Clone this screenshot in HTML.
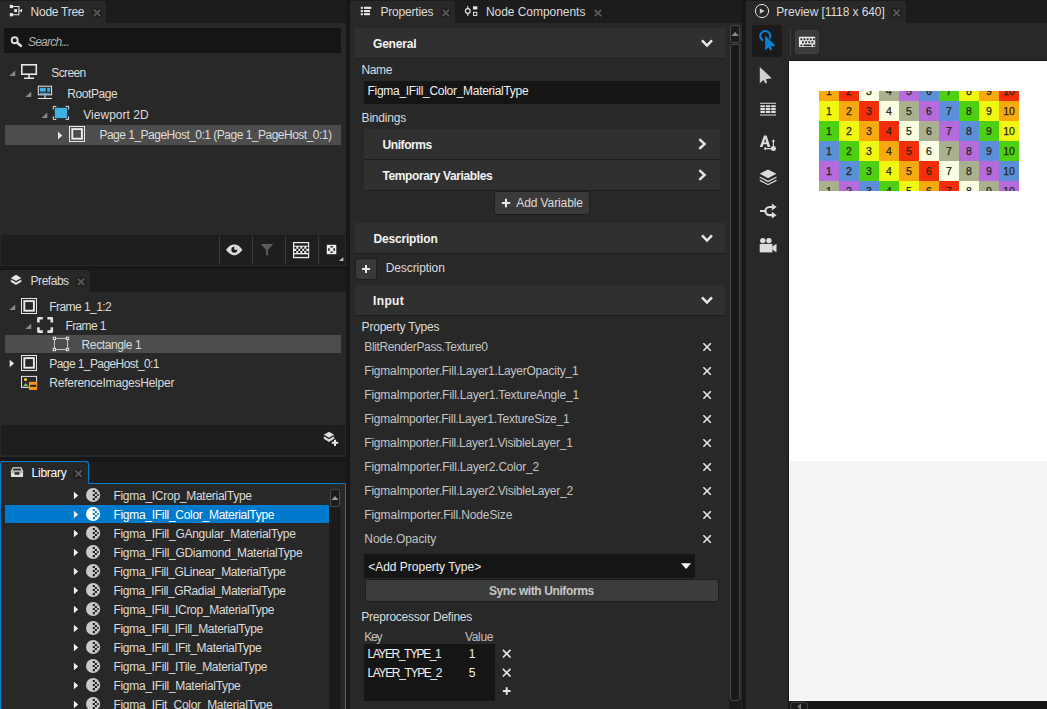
<!DOCTYPE html>
<html><head><meta charset="utf-8"><title>Properties</title>
<style>
*{box-sizing:border-box;margin:0;padding:0}
html,body{width:1047px;height:709px;overflow:hidden;background:#171717}
.ts{position:absolute;background:#1c1c1c}
body{position:relative;font-family:"Liberation Sans","DejaVu Sans",sans-serif;font-size:12px;color:#d8d8d8;line-height:1}
.a{position:absolute}
.p{position:absolute;background:#282828}
.t{position:absolute;white-space:nowrap;font-size:12px;line-height:14px;height:14px;color:#dcdcdc}
.tab{position:absolute;background:#282828;top:1px;height:22px;border-radius:3px 3px 0 0}
.hdr{position:absolute;background:#303030;border-bottom:1px solid #1e1e1e;height:31px}
.b{font-weight:bold;color:#f4f4f4}
.inp{position:absolute;background:#151515}
.sel{position:absolute;background:#4d4d4d}
.btn{position:absolute;background:#3a3a3a;border:1px solid #1e1e1e;border-radius:3px}
.sep{position:absolute;width:1px;background:#3a3a3a}
svg{position:absolute;overflow:visible}
.g i{display:block;float:left;width:20px;height:20px;font-style:normal;font-size:10.5px;line-height:20px;text-align:center;color:#26250e;-webkit-text-stroke:0.25px #26250e}
</style></head><body>

<div class="ts" style="left:0;top:0;width:346px;height:23px"></div>
<div class="ts" style="left:0;top:270px;width:346px;height:22px"></div>
<div class="ts" style="left:0;top:461px;width:346px;height:22px"></div>
<div class="ts" style="left:350px;top:0;width:392px;height:23px"></div>
<div class="ts" style="left:746px;top:0;width:301px;height:23px"></div>
<!-- ===== LEFT: Node Tree ===== -->
<div class="p" style="left:0;top:23px;width:346px;height:243px"></div>
<div class="tab" style="left:0;width:106px"></div>
<div class="inp" style="left:4px;top:28px;width:337px;height:25px"></div>
<div class="sel" style="left:5px;top:125px;width:336px;height:20px"></div>
<div class="a" style="left:1px;top:235px;width:344px;height:30px;background:#1e1e1e"></div>
<div class="sep" style="left:219px;top:236px;height:28px"></div>
<div class="sep" style="left:252px;top:236px;height:28px"></div>
<div class="sep" style="left:285px;top:236px;height:28px"></div>
<div class="sep" style="left:318px;top:236px;height:28px"></div>

<!-- ===== LEFT: Prefabs ===== -->
<div class="p" style="left:0;top:292px;width:346px;height:165px"></div>
<div class="tab" style="left:0;top:270px;width:90px;height:22px"></div>
<div class="sel" style="left:5px;top:335px;width:336px;height:18px"></div>
<div class="a" style="left:1px;top:425px;width:344px;height:30px;background:#1e1e1e"></div>

<!-- ===== LEFT: Library ===== -->
<div class="p" style="left:0;top:483px;width:346px;height:226px;border:1px solid #007acc;border-bottom:none"></div>
<div class="tab" style="left:0;top:461px;width:89px;height:23px;border:1px solid #007acc;border-bottom:none"></div>
<div class="a" style="left:5px;top:505px;width:324px;height:18px;background:#007acc"></div>

<!-- ===== MIDDLE: Properties ===== -->
<div class="p" style="left:350px;top:23px;width:392px;height:686px"></div>
<div class="tab" style="left:350px;width:105px"></div>
<div class="hdr" style="left:355px;top:28px;width:370px"></div>
<div class="inp" style="left:364px;top:81px;width:356px;height:23px"></div>
<div class="hdr" style="left:364px;top:129px;width:356px"></div>
<div class="hdr" style="left:364px;top:160px;width:356px"></div>
<div class="btn" style="left:494px;top:191px;width:96px;height:24px"></div>
<div class="hdr" style="left:355px;top:223px;width:370px"></div>
<div class="btn" style="left:355px;top:258px;width:22px;height:22px"></div>
<div class="hdr" style="left:355px;top:285px;width:370px"></div>
<div class="inp" style="left:364px;top:554px;width:331px;height:24px"></div>
<div class="btn" style="left:365px;top:579px;width:354px;height:23px;background:#3c3c3c"></div>
<div class="inp" style="left:364px;top:644px;width:131px;height:57px"></div>

<!-- ===== RIGHT: Preview ===== -->
<div class="p" style="left:746px;top:23px;width:301px;height:686px"></div>
<div class="tab" style="left:746px;width:160px"></div>
<div class="a" style="left:752px;top:25px;width:30px;height:32px;background:#1b1b1b;border-radius:3px"></div>
<div class="sep" style="left:790px;top:29px;height:26px;background:#3c3c3c"></div>
<div class="btn" style="left:795px;top:30px;width:24px;height:24px;background:#3b3b3b;border-color:#414141"></div>
<div class="a" style="left:788px;top:60px;width:259px;height:649px;background:#161616"></div>
<div class="a" style="left:789px;top:61px;width:258px;height:640px;background:#fff"></div>
<div class="a" style="left:790px;top:461px;width:257px;height:239px;background:#f4f4f4"></div>
<div class="a" style="left:819px;top:91px;width:200px;height:100px;overflow:hidden"><div class="a g" style="left:0;top:-10px;width:200px"><i style="background:#f7a90f">1</i><i style="background:#f42d0b">2</i><i style="background:#f8fde0">3</i><i style="background:#a8b090">4</i><i style="background:#b56bdb">5</i><i style="background:#5b8fd9">6</i><i style="background:#4dd012">7</i><i style="background:#f0f711">8</i><i style="background:#f7a90f">9</i><i style="background:#f42d0b">10</i><i style="background:#f0f711">1</i><i style="background:#f7a90f">2</i><i style="background:#f42d0b">3</i><i style="background:#f8fde0">4</i><i style="background:#a8b090">5</i><i style="background:#b56bdb">6</i><i style="background:#5b8fd9">7</i><i style="background:#4dd012">8</i><i style="background:#f0f711">9</i><i style="background:#f7a90f">10</i><i style="background:#4dd012">1</i><i style="background:#f0f711">2</i><i style="background:#f7a90f">3</i><i style="background:#f42d0b">4</i><i style="background:#f8fde0">5</i><i style="background:#a8b090">6</i><i style="background:#b56bdb">7</i><i style="background:#5b8fd9">8</i><i style="background:#4dd012">9</i><i style="background:#f0f711">10</i><i style="background:#5b8fd9">1</i><i style="background:#4dd012">2</i><i style="background:#f0f711">3</i><i style="background:#f7a90f">4</i><i style="background:#f42d0b">5</i><i style="background:#f8fde0">6</i><i style="background:#a8b090">7</i><i style="background:#b56bdb">8</i><i style="background:#5b8fd9">9</i><i style="background:#4dd012">10</i><i style="background:#b56bdb">1</i><i style="background:#5b8fd9">2</i><i style="background:#4dd012">3</i><i style="background:#f0f711">4</i><i style="background:#f7a90f">5</i><i style="background:#f42d0b">6</i><i style="background:#f8fde0">7</i><i style="background:#a8b090">8</i><i style="background:#b56bdb">9</i><i style="background:#5b8fd9">10</i><i style="background:#a8b090">1</i><i style="background:#b56bdb">2</i><i style="background:#5b8fd9">3</i><i style="background:#4dd012">4</i><i style="background:#f0f711">5</i><i style="background:#f7a90f">6</i><i style="background:#f42d0b">7</i><i style="background:#f8fde0">8</i><i style="background:#a8b090">9</i><i style="background:#b56bdb">10</i></div></div>

<svg width="1047" height="709" viewBox="0 0 1047 709" style="left:0;top:0"><g fill="#e6e6e6" stroke="none"><rect x="9.8" y="4.9" width="3.2" height="3.2"/><rect x="14.2" y="9.1" width="2.9" height="3"/><rect x="9.8" y="13.1" width="3.2" height="3.2"/></g>
<path d="M13 6.5H18.9V14.7H13M18.9 10.6H22M21.5 9V12.2" stroke="#e6e6e6" stroke-width="1.1" fill="none"/>
<rect x="92.19999999999999" y="8.2" width="9.8" height="9.5" fill="#1e1e1e"/>
<path d="M93.89999999999999 9.7L100.3 16.1M100.3 9.7L93.89999999999999 16.1" stroke="#585858" stroke-width="1.9" fill="none"/>
<circle cx="14.7" cy="40.3" r="3" fill="none" stroke="#dcdcdc" stroke-width="1.9"/><path d="M17.2 42.8L20.8 45.8" stroke="#dcdcdc" stroke-width="2.7" stroke-linecap="round"/>
<path d="M15.2 70.4V76H9.399999999999999Z" fill="#8a8a8a"/>
<path d="M31.2 91.4V97H25.4Z" fill="#8a8a8a"/>
<path d="M47.3 112.4V118H41.5Z" fill="#8a8a8a"/>
<path d="M58 131.7L62.3 135.5L58 139.3Z" fill="#ececec"/>
<rect x="21.8" y="64.8" width="14.5" height="9.4" fill="none" stroke="#e6e6e6" stroke-width="1.6"/><path d="M29 75V78M24 78.2H34.1" stroke="#e6e6e6" stroke-width="1.6" fill="none"/>
<rect x="38.3" y="86.2" width="13.3" height="8.6" fill="none" stroke="#e6e6e6" stroke-width="1"/><path d="M45 95.3V98M38 98.5H52" stroke="#e6e6e6" stroke-width="1.1" fill="none"/>
<g fill="#3cb1e2"><rect x="39.8" y="87.8" width="6" height="3.8"/><rect x="47.2" y="87.8" width="3" height="3.8"/><rect x="39.8" y="92.8" width="10.4" height="1.1"/></g>
<rect x="54.8" y="107.8" width="12.4" height="10.3" fill="#3cb1e2"/>
<path d="M56.3 106.4H53.3V109.4M65.6 106.4H68.6V109.4M53.3 116.4V119.4H56.3M68.6 116.4V119.4H65.6" stroke="#e6e6e6" stroke-width="1" fill="none"/>
<rect x="69.5" y="126.5" width="15" height="15" fill="none" stroke="#e8e8e8" stroke-width="1"/>
<rect x="72.3" y="129.1" width="9.6" height="9.6" fill="none" stroke="#ececec" stroke-width="1.9"/>
<path d="M226 249.8C229 245.6 232 244.4 234.2 244.4C236.6 244.4 239.6 245.6 242.4 249.8C239.6 254 236.6 255.2 234.2 255.2C232 255.2 229 254 226 249.8Z" fill="#dcdcdc"/>
<circle cx="234.3" cy="249.8" r="3" fill="#1e1e1e"/><path d="M234.3 249.8L234.3 246.6A3.2 3.2 0 0 1 237.5 249.8Z" fill="#dcdcdc"/>
<path d="M260.8 244H273.3L268 250V255.9L266 254.6V250Z" fill="#5c5c5c"/>
<rect x="293" y="242" width="16.2" height="16.2" fill="#ececec"/><rect x="294.2" y="243.2" width="13.8" height="2.5" fill="#1e1e1e"/><rect x="294.2" y="254.4" width="13.8" height="2.5" fill="#1e1e1e"/>
<path d="M294.3 246.70h2v2.1h-2zM298.3 246.70h2v2.1h-2zM302.3 246.70h2v2.1h-2zM306.3 246.70h2v2.1h-2zM296.3 248.85h2v2.1h-2zM300.3 248.85h2v2.1h-2zM304.3 248.85h2v2.1h-2zM294.3 251.00h2v2.1h-2zM298.3 251.00h2v2.1h-2zM302.3 251.00h2v2.1h-2zM306.3 251.00h2v2.1h-2z" fill="#111"/>
<rect x="326.8" y="244.8" width="9.5" height="9.4" fill="#ececec"/><path d="M330.4 246.2h2.4v1.4h-2.4zM330.4 251.4h2.4v1.4h-2.4zM328.2 248.3h1.4v2.4h-1.4zM333.5 248.3h1.4v2.4h-1.4z" fill="#050505"/>
<path d="M343.3 256.9V260.9H339Z" fill="#c4c4c4"/>
<path d="M16 274.8L21.3 277.9L16 281L10.8 277.9Z" fill="#e6e6e6"/><path d="M10.8 279.4L16 282.5L21.3 279.4V281.7L16 284.9L10.8 281.7Z" fill="#e6e6e6"/>
<rect x="76.1" y="277.1" width="9.8" height="9.5" fill="#1e1e1e"/>
<path d="M77.8 278.6L84.2 285.0M84.2 278.6L77.8 285.0" stroke="#585858" stroke-width="1.9" fill="none"/>
<path d="M15.2 304.4V310H9.399999999999999Z" fill="#8a8a8a"/>
<path d="M31.2 323.4V329H25.4Z" fill="#8a8a8a"/>
<path d="M9.7 359.7L14.0 363.5L9.7 367.3Z" fill="#ececec"/>
<rect x="21.5" y="298.5" width="15" height="15" fill="none" stroke="#e8e8e8" stroke-width="1"/>
<rect x="24.3" y="301.1" width="9.6" height="9.6" fill="none" stroke="#ececec" stroke-width="1.9"/>
<path d="M42.8 318.2H38.4V322.6M47.4 318.2H51.8V322.6M38.4 327.2V331.6H42.8M51.8 327.2V331.6H47.4" stroke="#e2e2e2" stroke-width="2.6" fill="none" stroke-linejoin="round"/>
<path d="M56 338.4H66M56 349.6H66M54.4 340V348M67.6 340V348" stroke="#c8c8c8" stroke-width="1" fill="none"/>
<g fill="#4d4d4d" stroke="#f0f0f0" stroke-width="0.9"><rect x="53.2" y="337.2" width="2.4" height="2.4"/><rect x="66.3" y="337.2" width="2.4" height="2.4"/><rect x="53.2" y="348.3" width="2.4" height="2.4"/><rect x="66.3" y="348.3" width="2.4" height="2.4"/></g>
<rect x="21.5" y="355.5" width="15" height="15" fill="none" stroke="#e8e8e8" stroke-width="1"/>
<rect x="24.3" y="358.1" width="9.6" height="9.6" fill="none" stroke="#ececec" stroke-width="1.9"/>
<rect x="21.5" y="376.4" width="15.1" height="11" fill="none" stroke="#e6e6e6" stroke-width="1"/><circle cx="25.5" cy="379.5" r="1.5" fill="#f2e51c"/><path d="M22.8 386.3L25.7 383L28.6 386.3Z" fill="#7cc24e"/>
<rect x="28.9" y="381.8" width="8.2" height="8.2" fill="#f7941e"/><rect x="30.3" y="384.8" width="5.9" height="2" fill="#222"/>
<path d="M329 431.7L334.2 434.7L329 437.8L323.8 434.7Z" fill="#dcdcdc"/><path d="M323.8 436.2L329 439.3L334.2 436.2V438.8L329 442L323.8 438.8Z" fill="#dcdcdc"/>
<path d="M335 439.4V446.2M331.6 442.8H338.4" stroke="#1e1e1e" stroke-width="3.6"/><path d="M335 439.7V446M331.8 442.8H338.2" stroke="#e8e8e8" stroke-width="2"/>
<path d="M13.2 467.8H20.9L22.6 471.2H11.4Z" fill="none" stroke="#e0e0e0" stroke-width="1.2"/><path d="M10.9 472.2H23.1V477H10.9Z" fill="#e0e0e0"/><rect x="14.6" y="472.2" width="4.9" height="2.5" fill="#282828"/>
<rect x="73.69999999999999" y="469.0" width="9.8" height="9.5" fill="#1e1e1e"/>
<path d="M75.39999999999999 470.5L81.8 476.9M81.8 470.5L75.39999999999999 476.9" stroke="#585858" stroke-width="1.9" fill="none"/>
<path d="M73.9 491.7L78.2 495.5L73.9 499.3Z" fill="#f2f2f2"/>
<circle cx="93.1" cy="495.0" r="7.1" fill="#cacaca"/>
<path d="M92.80 489.90h2.05v2.05h-2.05zM94.85 491.95h2.05v2.05h-2.05zM92.80 494.00h2.05v2.05h-2.05zM94.85 496.05h2.05v2.05h-2.05zM92.80 498.10h2.05v2.05h-2.05z" fill="#1c1c1c"/><path d="M96.90 494.00h2.05v2.05h-2.05z" fill="#1c1c1c" opacity="0.75"/>
<path d="M97.6 490.4l1.3 1.3M97.6 499.6l1.3 -1.3" stroke="#1c1c1c" stroke-width="0.9" opacity="0.6"/>
<path d="M73.9 510.7L78.2 514.5L73.9 518.3Z" fill="#f2f2f2"/>
<circle cx="93.1" cy="514.0" r="7.1" fill="#ffffff"/>
<path d="M92.80 508.90h2.05v2.05h-2.05zM94.85 510.95h2.05v2.05h-2.05zM92.80 513.00h2.05v2.05h-2.05zM94.85 515.05h2.05v2.05h-2.05zM92.80 517.10h2.05v2.05h-2.05z" fill="#007acc"/><path d="M96.90 513.00h2.05v2.05h-2.05z" fill="#007acc" opacity="0.75"/>
<path d="M97.6 509.4l1.3 1.3M97.6 518.6l1.3 -1.3" stroke="#007acc" stroke-width="0.9" opacity="0.6"/>
<path d="M73.9 529.7L78.2 533.5L73.9 537.3Z" fill="#f2f2f2"/>
<circle cx="93.1" cy="533.0" r="7.1" fill="#cacaca"/>
<path d="M92.80 527.90h2.05v2.05h-2.05zM94.85 529.95h2.05v2.05h-2.05zM92.80 532.00h2.05v2.05h-2.05zM94.85 534.05h2.05v2.05h-2.05zM92.80 536.10h2.05v2.05h-2.05z" fill="#1c1c1c"/><path d="M96.90 532.00h2.05v2.05h-2.05z" fill="#1c1c1c" opacity="0.75"/>
<path d="M97.6 528.4l1.3 1.3M97.6 537.6l1.3 -1.3" stroke="#1c1c1c" stroke-width="0.9" opacity="0.6"/>
<path d="M73.9 548.7L78.2 552.5L73.9 556.3Z" fill="#f2f2f2"/>
<circle cx="93.1" cy="552.0" r="7.1" fill="#cacaca"/>
<path d="M92.80 546.90h2.05v2.05h-2.05zM94.85 548.95h2.05v2.05h-2.05zM92.80 551.00h2.05v2.05h-2.05zM94.85 553.05h2.05v2.05h-2.05zM92.80 555.10h2.05v2.05h-2.05z" fill="#1c1c1c"/><path d="M96.90 551.00h2.05v2.05h-2.05z" fill="#1c1c1c" opacity="0.75"/>
<path d="M97.6 547.4l1.3 1.3M97.6 556.6l1.3 -1.3" stroke="#1c1c1c" stroke-width="0.9" opacity="0.6"/>
<path d="M73.9 567.7L78.2 571.5L73.9 575.3Z" fill="#f2f2f2"/>
<circle cx="93.1" cy="571.0" r="7.1" fill="#cacaca"/>
<path d="M92.80 565.90h2.05v2.05h-2.05zM94.85 567.95h2.05v2.05h-2.05zM92.80 570.00h2.05v2.05h-2.05zM94.85 572.05h2.05v2.05h-2.05zM92.80 574.10h2.05v2.05h-2.05z" fill="#1c1c1c"/><path d="M96.90 570.00h2.05v2.05h-2.05z" fill="#1c1c1c" opacity="0.75"/>
<path d="M97.6 566.4l1.3 1.3M97.6 575.6l1.3 -1.3" stroke="#1c1c1c" stroke-width="0.9" opacity="0.6"/>
<path d="M73.9 586.7L78.2 590.5L73.9 594.3Z" fill="#f2f2f2"/>
<circle cx="93.1" cy="590.0" r="7.1" fill="#cacaca"/>
<path d="M92.80 584.90h2.05v2.05h-2.05zM94.85 586.95h2.05v2.05h-2.05zM92.80 589.00h2.05v2.05h-2.05zM94.85 591.05h2.05v2.05h-2.05zM92.80 593.10h2.05v2.05h-2.05z" fill="#1c1c1c"/><path d="M96.90 589.00h2.05v2.05h-2.05z" fill="#1c1c1c" opacity="0.75"/>
<path d="M97.6 585.4l1.3 1.3M97.6 594.6l1.3 -1.3" stroke="#1c1c1c" stroke-width="0.9" opacity="0.6"/>
<path d="M73.9 605.7L78.2 609.5L73.9 613.3Z" fill="#f2f2f2"/>
<circle cx="93.1" cy="609.0" r="7.1" fill="#cacaca"/>
<path d="M92.80 603.90h2.05v2.05h-2.05zM94.85 605.95h2.05v2.05h-2.05zM92.80 608.00h2.05v2.05h-2.05zM94.85 610.05h2.05v2.05h-2.05zM92.80 612.10h2.05v2.05h-2.05z" fill="#1c1c1c"/><path d="M96.90 608.00h2.05v2.05h-2.05z" fill="#1c1c1c" opacity="0.75"/>
<path d="M97.6 604.4l1.3 1.3M97.6 613.6l1.3 -1.3" stroke="#1c1c1c" stroke-width="0.9" opacity="0.6"/>
<path d="M73.9 624.7L78.2 628.5L73.9 632.3Z" fill="#f2f2f2"/>
<circle cx="93.1" cy="628.0" r="7.1" fill="#cacaca"/>
<path d="M92.80 622.90h2.05v2.05h-2.05zM94.85 624.95h2.05v2.05h-2.05zM92.80 627.00h2.05v2.05h-2.05zM94.85 629.05h2.05v2.05h-2.05zM92.80 631.10h2.05v2.05h-2.05z" fill="#1c1c1c"/><path d="M96.90 627.00h2.05v2.05h-2.05z" fill="#1c1c1c" opacity="0.75"/>
<path d="M97.6 623.4l1.3 1.3M97.6 632.6l1.3 -1.3" stroke="#1c1c1c" stroke-width="0.9" opacity="0.6"/>
<path d="M73.9 643.7L78.2 647.5L73.9 651.3Z" fill="#f2f2f2"/>
<circle cx="93.1" cy="647.0" r="7.1" fill="#cacaca"/>
<path d="M92.80 641.90h2.05v2.05h-2.05zM94.85 643.95h2.05v2.05h-2.05zM92.80 646.00h2.05v2.05h-2.05zM94.85 648.05h2.05v2.05h-2.05zM92.80 650.10h2.05v2.05h-2.05z" fill="#1c1c1c"/><path d="M96.90 646.00h2.05v2.05h-2.05z" fill="#1c1c1c" opacity="0.75"/>
<path d="M97.6 642.4l1.3 1.3M97.6 651.6l1.3 -1.3" stroke="#1c1c1c" stroke-width="0.9" opacity="0.6"/>
<path d="M73.9 662.7L78.2 666.5L73.9 670.3Z" fill="#f2f2f2"/>
<circle cx="93.1" cy="666.0" r="7.1" fill="#cacaca"/>
<path d="M92.80 660.90h2.05v2.05h-2.05zM94.85 662.95h2.05v2.05h-2.05zM92.80 665.00h2.05v2.05h-2.05zM94.85 667.05h2.05v2.05h-2.05zM92.80 669.10h2.05v2.05h-2.05z" fill="#1c1c1c"/><path d="M96.90 665.00h2.05v2.05h-2.05z" fill="#1c1c1c" opacity="0.75"/>
<path d="M97.6 661.4l1.3 1.3M97.6 670.6l1.3 -1.3" stroke="#1c1c1c" stroke-width="0.9" opacity="0.6"/>
<path d="M73.9 681.7L78.2 685.5L73.9 689.3Z" fill="#f2f2f2"/>
<circle cx="93.1" cy="685.0" r="7.1" fill="#cacaca"/>
<path d="M92.80 679.90h2.05v2.05h-2.05zM94.85 681.95h2.05v2.05h-2.05zM92.80 684.00h2.05v2.05h-2.05zM94.85 686.05h2.05v2.05h-2.05zM92.80 688.10h2.05v2.05h-2.05z" fill="#1c1c1c"/><path d="M96.90 684.00h2.05v2.05h-2.05z" fill="#1c1c1c" opacity="0.75"/>
<path d="M97.6 680.4l1.3 1.3M97.6 689.6l1.3 -1.3" stroke="#1c1c1c" stroke-width="0.9" opacity="0.6"/>
<path d="M73.9 700.7L78.2 704.5L73.9 708.3Z" fill="#f2f2f2"/>
<circle cx="93.1" cy="704.0" r="7.1" fill="#cacaca"/>
<path d="M92.80 698.90h2.05v2.05h-2.05zM94.85 700.95h2.05v2.05h-2.05zM92.80 703.00h2.05v2.05h-2.05zM94.85 705.05h2.05v2.05h-2.05zM92.80 707.10h2.05v2.05h-2.05z" fill="#1c1c1c"/><path d="M96.90 703.00h2.05v2.05h-2.05z" fill="#1c1c1c" opacity="0.75"/>
<path d="M97.6 699.4l1.3 1.3M97.6 708.6l1.3 -1.3" stroke="#1c1c1c" stroke-width="0.9" opacity="0.6"/>
<rect x="329.3" y="507" width="11.4" height="202" fill="#1b1b1b"/>
<rect x="330.6" y="489.3" width="8.9" height="17.2" rx="2" fill="#1b1b1b" stroke="#4c4c4c" stroke-width="1"/><path d="M331.5 500H338.5L335 496Z" fill="#9a9a9a"/>
<g fill="#e6e6e6"><rect x="360.8" y="6.8" width="2.1" height="2.1"/><rect x="360.8" y="10" width="2.1" height="2.1"/><rect x="360.8" y="13.1" width="2.1" height="2.1"/><rect x="364" y="6.8" width="7.3" height="2.1"/><rect x="364" y="10" width="6" height="2.1"/><rect x="364" y="13.1" width="6" height="2.1"/></g>
<rect x="441.0" y="8.2" width="9.8" height="9.5" fill="#1e1e1e"/>
<path d="M442.7 9.7L449.09999999999997 16.1M449.09999999999997 9.7L442.7 16.1" stroke="#585858" stroke-width="1.9" fill="none"/>
<path d="M467.8 6V16" stroke="#e6e6e6" stroke-width="1.1"/><circle cx="467.8" cy="11" r="2.4" fill="#1b1b1b" stroke="#e6e6e6" stroke-width="1.2"/><rect x="473" y="6.3" width="4.3" height="3.2" fill="#e6e6e6"/><rect x="473.5" y="12.3" width="3.3" height="3.1" fill="none" stroke="#e6e6e6" stroke-width="1"/>
<path d="M594.8 9.8L601.2 16.2M601.2 9.8L594.8 16.2" stroke="#585858" stroke-width="1.9" fill="none"/>
<path d="M702 40.3L707 45.5L712 40.3" stroke="#e8e8e8" stroke-width="2.5" fill="none"/>
<path d="M702 235.3L707 240.5L712 235.3" stroke="#e8e8e8" stroke-width="2.5" fill="none"/>
<path d="M702 297.3L707 302.5L712 297.3" stroke="#e8e8e8" stroke-width="2.5" fill="none"/>
<path d="M699.3 139.2L704.6 144L699.3 148.8" stroke="#e4e4e4" stroke-width="2.4" fill="none"/>
<path d="M699.3 170.2L704.6 175L699.3 179.8" stroke="#e4e4e4" stroke-width="2.4" fill="none"/>
<path d="M506 198.8V207.2M501.8 203H510.2" stroke="#e8e8e8" stroke-width="2.1"/>
<path d="M366 265V273M362 269H370" stroke="#e8e8e8" stroke-width="2"/>
<path d="M703.4 343.3L710.8000000000001 350.7M710.8000000000001 343.3L703.4 350.7" stroke="#e8e8e8" stroke-width="1.6" fill="none"/>
<path d="M703.4 367.3L710.8000000000001 374.7M710.8000000000001 367.3L703.4 374.7" stroke="#e8e8e8" stroke-width="1.6" fill="none"/>
<path d="M703.4 391.3L710.8000000000001 398.7M710.8000000000001 391.3L703.4 398.7" stroke="#e8e8e8" stroke-width="1.6" fill="none"/>
<path d="M703.4 415.3L710.8000000000001 422.7M710.8000000000001 415.3L703.4 422.7" stroke="#e8e8e8" stroke-width="1.6" fill="none"/>
<path d="M703.4 439.3L710.8000000000001 446.7M710.8000000000001 439.3L703.4 446.7" stroke="#e8e8e8" stroke-width="1.6" fill="none"/>
<path d="M703.4 463.3L710.8000000000001 470.7M710.8000000000001 463.3L703.4 470.7" stroke="#e8e8e8" stroke-width="1.6" fill="none"/>
<path d="M703.4 487.3L710.8000000000001 494.7M710.8000000000001 487.3L703.4 494.7" stroke="#e8e8e8" stroke-width="1.6" fill="none"/>
<path d="M703.4 511.3L710.8000000000001 518.7M710.8000000000001 511.3L703.4 518.7" stroke="#e8e8e8" stroke-width="1.6" fill="none"/>
<path d="M703.4 535.3L710.8000000000001 542.7M710.8000000000001 535.3L703.4 542.7" stroke="#e8e8e8" stroke-width="1.6" fill="none"/>
<path d="M681 563.2H691.2L686.1 569Z" fill="#f4f4f4"/>
<path d="M502.9 649.9000000000001L510.5 657.5M510.5 649.9000000000001L502.9 657.5" stroke="#e8e8e8" stroke-width="1.6" fill="none"/>
<path d="M502.9 668.9000000000001L510.5 676.5M510.5 668.9000000000001L502.9 676.5" stroke="#e8e8e8" stroke-width="1.6" fill="none"/>
<path d="M506.7 687.2V694.8M502.9 691H510.5" stroke="#e8e8e8" stroke-width="2"/>
<rect x="730.5" y="25.4" width="9.2" height="17" rx="2" fill="#1b1b1b" stroke="#4a4a4a" stroke-width="1"/><path d="M731.4 36H738.8L735.1 32Z" fill="#8c8c8c"/>
<rect x="729.3" y="699" width="11.7" height="10" fill="#1b1b1b"/><rect x="730.5" y="44.5" width="9.2" height="656" rx="2" fill="#191919" stroke="#4a4a4a" stroke-width="1"/>
<circle cx="762" cy="11" r="6.6" fill="none" stroke="#e6e6e6" stroke-width="1"/><path d="M759.8 8.4V13.7L764.5 11Z" fill="#d4d4d4"/>
<rect x="891.7" y="8.2" width="9.8" height="9.5" fill="#1e1e1e"/>
<path d="M893.4 9.7L899.8000000000001 16.1M899.8000000000001 9.7L893.4 16.1" stroke="#585858" stroke-width="1.9" fill="none"/>
<path d="M763.2 40.6A5 5 0 1 1 769.6 38.6" fill="none" stroke="#0a80d2" stroke-width="2.1"/>
<path d="M765.2 35.6V50.6L768.6 47.6L770.4 50.4L772.4 49.2L770.8 46.6L775.6 45.8Z" fill="#0a80d2"/>
<rect x="798.9" y="36.8" width="16.3" height="10.3" rx="0.8" fill="#ececec"/>
<path d="M800.40 38.2h1.9v2h-1.9zM803.55 38.2h1.9v2h-1.9zM806.70 38.2h1.9v2h-1.9zM809.85 38.2h1.9v2h-1.9zM813.00 38.2h1.9v2h-1.9zM802.00 41.3h1.9v2h-1.9zM805.15 41.3h1.9v2h-1.9zM808.30 41.3h1.9v2h-1.9zM811.45 41.3h1.9v2h-1.9zM800.4 44.4h1.9v1.8h-1.9zM813 44.4h1.9v1.8h-1.9zM803.5 44.4h8v1.8h-8z" fill="#2a2a2a"/>
<path d="M759.8 67V83.2L763.6 80L765.2 83.4L767.2 82.4L765.8 79.2L771.7 78.2Z" fill="#cfcfcf"/>
<path d="M760 103.3H776M760 115H776" stroke="#e0e0e0" stroke-width="1.1"/>
<path d="M760.4 105.2h4.5v2.1h-4.5zM765.8 105.2h4.5v2.1h-4.5zM771.2 105.2h4.5v2.1h-4.5zM760.4 108.1h4.5v2.1h-4.5zM765.8 108.1h4.5v2.1h-4.5zM771.2 108.1h4.5v2.1h-4.5zM760.4 111.0h4.5v2.1h-4.5zM765.8 111.0h4.5v2.1h-4.5zM771.2 111.0h4.5v2.1h-4.5z" fill="#e0e0e0"/>
<path fill-rule="evenodd" d="M759.8 146.9L764 135.4H766.6L770.4 146.9H767.6L766.8 144.3H763.4L762.6 146.9ZM764.1 142.2H766.2L765.2 138.6Z" fill="#dcdcdc"/>
<circle cx="773.4" cy="148.6" r="2.5" fill="#dcdcdc"/><path d="M773.4 148.6V141M765.5 148.6H773" stroke="#dcdcdc" stroke-width="1.1"/><path d="M771.6 141.6L773.4 139.2L775.2 141.6ZM766 146.8L763.6 148.6L766 150.4Z" fill="#dcdcdc"/>
<path d="M768 169.4L776.5 173.8L768 178.2L759.7 173.8Z" fill="#dcdcdc"/><path d="M759.7 176.4L768 180.7L776.5 176.4V177.8L768 182.2L759.7 177.8ZM759.7 179.6L768 183.9L776.5 179.6V180.9L768 185.2L759.7 180.9Z" fill="#dcdcdc"/>
<path d="M760 211H765M772.5 207H769.5A4 4 0 0 0 769.5 215.2H772.5" stroke="#dcdcdc" stroke-width="2.2" fill="none"/><path d="M771.8 203.6L776.6 207L771.8 210.4ZM771.8 211.8L776.6 215.2L771.8 218.6Z" fill="#dcdcdc"/>
<circle cx="762.8" cy="240.6" r="2.7" fill="#dcdcdc"/><circle cx="768.9" cy="240.6" r="2.7" fill="#dcdcdc"/><rect x="759.7" y="243.9" width="12.7" height="8.5" fill="#dcdcdc"/><path d="M772.4 246.6L776.5 243.8V252.4L772.4 249.6Z" fill="#dcdcdc"/>
<rect x="790.8" y="702.4" width="16.6" height="12" rx="2" fill="#181818" stroke="#484848" stroke-width="1"/><path d="M801 703.5V709H800L797.3 706.5Z" fill="#7a7a7a"/></svg>
<div class="t" style="left:30.6px;top:5px;letter-spacing:-0.268px;">Node Tree</div>
<div class="t" style="left:28.0px;top:35px;letter-spacing:-0.791px;font-style:italic;color:#b0b0b0">Search...</div>
<div class="t" style="left:51.3px;top:66px;letter-spacing:-0.606px;">Screen</div>
<div class="t" style="left:67.3px;top:87px;letter-spacing:-0.411px;">RootPage</div>
<div class="t" style="left:83.3px;top:108px;letter-spacing:0.014px;">Viewport 2D</div>
<div class="t" style="left:99.4px;top:128px;letter-spacing:-0.506px;">Page 1_PageHost_0:1 (Page 1_PageHost_0:1)</div>
<div class="t" style="left:30.6px;top:274px;letter-spacing:-0.477px;">Prefabs</div>
<div class="t" style="left:49.3px;top:300px;letter-spacing:-0.565px;">Frame 1_1:2</div>
<div class="t" style="left:65.5px;top:319px;letter-spacing:-0.631px;">Frame 1</div>
<div class="t" style="left:81.6px;top:338px;letter-spacing:-0.395px;">Rectangle 1</div>
<div class="t" style="left:49.3px;top:357px;letter-spacing:-0.587px;">Page 1_PageHost_0:1</div>
<div class="t" style="left:49.3px;top:376px;letter-spacing:-0.249px;">ReferenceImagesHelper</div>
<div class="t" style="left:31.5px;top:466px;letter-spacing:-0.231px;color:#fff">Library</div>
<div class="t" style="left:113.4px;top:489px;letter-spacing:-0.267px;">Figma_ICrop_MaterialType</div>
<div class="t" style="left:113.4px;top:508px;letter-spacing:-0.286px;color:#fff">Figma_IFill_Color_MaterialType</div>
<div class="t" style="left:113.4px;top:527px;letter-spacing:-0.279px;">Figma_IFill_GAngular_MaterialType</div>
<div class="t" style="left:113.4px;top:546px;letter-spacing:-0.277px;">Figma_IFill_GDiamond_MaterialType</div>
<div class="t" style="left:113.4px;top:565px;letter-spacing:-0.349px;">Figma_IFill_GLinear_MaterialType</div>
<div class="t" style="left:113.4px;top:584px;letter-spacing:-0.370px;">Figma_IFill_GRadial_MaterialType</div>
<div class="t" style="left:113.4px;top:603px;letter-spacing:-0.309px;">Figma_IFill_ICrop_MaterialType</div>
<div class="t" style="left:113.4px;top:622px;letter-spacing:-0.327px;">Figma_IFill_IFill_MaterialType</div>
<div class="t" style="left:113.4px;top:641px;letter-spacing:-0.321px;">Figma_IFill_IFit_MaterialType</div>
<div class="t" style="left:113.4px;top:660px;letter-spacing:-0.305px;">Figma_IFill_ITile_MaterialType</div>
<div class="t" style="left:113.4px;top:679px;letter-spacing:-0.289px;">Figma_IFill_MaterialType</div>
<div class="t" style="left:113.4px;top:698px;letter-spacing:-0.290px;">Figma_IFit_Color_MaterialType</div>
<div class="t" style="left:380.5px;top:5px;letter-spacing:-0.200px;">Properties</div>
<div class="t" style="left:485.9px;top:5px;letter-spacing:-0.040px;">Node Components</div>
<div class="t b" style="left:373.0px;top:37px;letter-spacing:-0.201px;">General</div>
<div class="t" style="left:361.6px;top:63px;letter-spacing:-0.405px;">Name</div>
<div class="t" style="left:367.5px;top:84px;letter-spacing:-0.286px;color:#f0f0f0">Figma_IFill_Color_MaterialType</div>
<div class="t" style="left:361.6px;top:111px;letter-spacing:-0.204px;">Bindings</div>
<div class="t b" style="left:382.5px;top:138px;letter-spacing:-0.425px;">Uniforms</div>
<div class="t b" style="left:382.5px;top:169px;letter-spacing:-0.387px;">Temporary Variables</div>
<div class="t" style="left:516.3px;top:196px;letter-spacing:-0.103px;">Add Variable</div>
<div class="t b" style="left:373.4px;top:232px;letter-spacing:-0.162px;">Description</div>
<div class="t" style="left:385.7px;top:261px;letter-spacing:-0.083px;">Description</div>
<div class="t b" style="left:373.0px;top:294px;letter-spacing:0.368px;">Input</div>
<div class="t" style="left:361.6px;top:320px;letter-spacing:-0.206px;">Property Types</div>
<div class="t" style="left:364.3px;top:340px;letter-spacing:-0.385px;color:#c4c4c4">BlitRenderPass.Texture0</div>
<div class="t" style="left:364.3px;top:364px;letter-spacing:-0.232px;color:#c4c4c4">FigmaImporter.Fill.Layer1.LayerOpacity_1</div>
<div class="t" style="left:364.3px;top:388px;letter-spacing:-0.205px;color:#c4c4c4">FigmaImporter.Fill.Layer1.TextureAngle_1</div>
<div class="t" style="left:364.3px;top:412px;letter-spacing:-0.266px;color:#c4c4c4">FigmaImporter.Fill.Layer1.TextureSize_1</div>
<div class="t" style="left:364.3px;top:436px;letter-spacing:-0.240px;color:#c4c4c4">FigmaImporter.Fill.Layer1.VisibleLayer_1</div>
<div class="t" style="left:364.3px;top:460px;letter-spacing:-0.203px;color:#c4c4c4">FigmaImporter.Fill.Layer2.Color_2</div>
<div class="t" style="left:364.3px;top:484px;letter-spacing:-0.230px;color:#c4c4c4">FigmaImporter.Fill.Layer2.VisibleLayer_2</div>
<div class="t" style="left:364.3px;top:508px;letter-spacing:-0.127px;color:#c4c4c4">FigmaImporter.Fill.NodeSize</div>
<div class="t" style="left:364.3px;top:532px;letter-spacing:-0.073px;color:#c4c4c4">Node.Opacity</div>
<div class="t" style="left:368.2px;top:560px;letter-spacing:-0.010px;color:#f0f0f0">&lt;Add Property Type&gt;</div>
<div class="t b" style="left:488.9px;top:584px;letter-spacing:-0.401px;color:#c8c8c8">Sync with Uniforms</div>
<div class="t" style="left:361.2px;top:610px;letter-spacing:-0.226px;">Preprocessor Defines</div>
<div class="t" style="left:364.3px;top:630px;letter-spacing:-1.244px;color:#c0c0c0">Key</div>
<div class="t" style="left:464.9px;top:630px;letter-spacing:-0.303px;color:#c0c0c0">Value</div>
<div class="t" style="left:367.4px;top:647px;letter-spacing:-1.412px;color:#f0f0f0">LAYER_TYPE_1</div>
<div class="t" style="left:367.4px;top:666px;letter-spacing:-1.339px;color:#f0f0f0">LAYER_TYPE_2</div>
<div class="t" style="left:468.8px;top:647px;letter-spacing:0.000px;color:#f0f0f0">1</div>
<div class="t" style="left:468.8px;top:666px;letter-spacing:0.000px;color:#f0f0f0">5</div>
<div class="t" style="left:776.2px;top:5px;letter-spacing:-0.089px;">Preview [1118 x 640]</div>
</body></html>
